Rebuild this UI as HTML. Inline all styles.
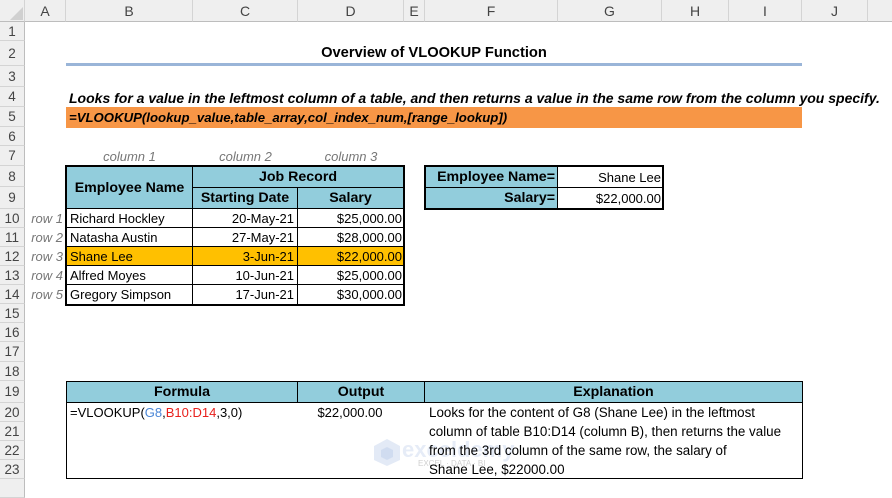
<!DOCTYPE html>
<html><head><meta charset="utf-8"><style>
*{margin:0;padding:0;box-sizing:border-box}
body{width:892px;height:487px;overflow:hidden;background:#fff;font-family:"Liberation Sans",sans-serif;font-size:13px;color:#000;position:relative}
.a{position:absolute;white-space:nowrap}
.ch{position:absolute;top:0;height:22px;background:#efefef;border-right:1px solid #d4d4d4;border-bottom:1px solid #bdbdbd;text-align:center;line-height:22px;color:#444;font-size:14px}
.rh{position:absolute;left:0;width:25px;background:#efefef;border-right:1px solid #bdbdbd;border-bottom:1px solid #d4d4d4;text-align:center;color:#444;font-size:13.5px}
.c{position:absolute;display:flex;align-items:center;padding:0 3px;white-space:nowrap}
.b{font-weight:bold}
.t{background:#92cddc}
.r{justify-content:flex-end}
.m{justify-content:center}
.g{color:#777;font-style:italic}
.h{font-size:14.2px}
</style></head><body>
<div class="ch" style="left:0;width:25px"></div>
<svg class="a" style="left:10px;top:7px" width="13" height="13"><polygon points="13,0 13,13 0,13" fill="#d0d0d0"/></svg>
<div class="ch" style="left:25px;width:41px">A</div>
<div class="ch" style="left:66px;width:127px">B</div>
<div class="ch" style="left:193px;width:105px">C</div>
<div class="ch" style="left:298px;width:106px">D</div>
<div class="ch" style="left:404px;width:21px">E</div>
<div class="ch" style="left:425px;width:133px">F</div>
<div class="ch" style="left:558px;width:104px">G</div>
<div class="ch" style="left:662px;width:67px">H</div>
<div class="ch" style="left:729px;width:73px">I</div>
<div class="ch" style="left:802px;width:66px">J</div>
<div class="ch" style="left:868px;width:24px;border-right:none"></div>
<div class="rh" style="top:22px;height:19px;line-height:19px">1</div>
<div class="rh" style="top:41px;height:25px;line-height:25px">2</div>
<div class="rh" style="top:66px;height:21px;line-height:21px">3</div>
<div class="rh" style="top:87px;height:20px;line-height:20px">4</div>
<div class="rh" style="top:107px;height:20px;line-height:20px">5</div>
<div class="rh" style="top:127px;height:19px;line-height:19px">6</div>
<div class="rh" style="top:146px;height:20px;line-height:20px">7</div>
<div class="rh" style="top:166px;height:21px;line-height:21px">8</div>
<div class="rh" style="top:187px;height:22px;line-height:22px">9</div>
<div class="rh" style="top:209px;height:19px;line-height:19px">10</div>
<div class="rh" style="top:228px;height:19px;line-height:19px">11</div>
<div class="rh" style="top:247px;height:19px;line-height:19px">12</div>
<div class="rh" style="top:266px;height:19px;line-height:19px">13</div>
<div class="rh" style="top:285px;height:19px;line-height:19px">14</div>
<div class="rh" style="top:304px;height:19px;line-height:19px">15</div>
<div class="rh" style="top:323px;height:19px;line-height:19px">16</div>
<div class="rh" style="top:342px;height:20px;line-height:20px">17</div>
<div class="rh" style="top:362px;height:19px;line-height:19px">18</div>
<div class="rh" style="top:381px;height:22px;line-height:22px">19</div>
<div class="rh" style="top:403px;height:19px;line-height:19px">20</div>
<div class="rh" style="top:422px;height:19px;line-height:19px">21</div>
<div class="rh" style="top:441px;height:19px;line-height:19px">22</div>
<div class="rh" style="top:460px;height:19px;line-height:19px">23</div>
<div class="rh" style="top:479px;height:19px;line-height:19px"></div>

<div class="c b m" style="left:66px;width:736px;top:43px;height:20px;font-size:14.7px">Overview of VLOOKUP Function</div>
<div class="a" style="left:66px;top:63px;width:736px;height:3px;background:#9ab5d8"></div>
<div class="c b" style="left:66px;top:88px;height:19px;font-style:italic;font-size:14px">Looks for a value in the leftmost column of a table, and then returns a value in the same row from the column you specify.</div>
<div class="c b" style="left:66px;top:107px;width:736px;height:21px;background:#f79646;font-style:italic;font-size:13.2px">=VLOOKUP(lookup_value,table_array,col_index_num,[range_lookup])</div>

<div class="c g m" style="left:66px;width:127px;top:146px;height:20px">column 1</div>
<div class="c g m" style="left:193px;width:105px;top:146px;height:20px">column 2</div>
<div class="c g m" style="left:298px;width:106px;top:146px;height:20px">column 3</div>

<div class="a" style="left:65px;top:165px;width:340px;height:141px;border:2px solid #000"></div>
<div class="c t b m h" style="left:67px;top:167px;width:126px;height:42px;border-right:1px solid #000;border-bottom:1px solid #000">Employee Name</div>
<div class="c t b m h" style="left:193px;top:167px;width:210px;height:21px;border-bottom:1px solid #000">Job Record</div>
<div class="c t b m h" style="left:193px;top:188px;width:105px;height:21px;border-right:1px solid #000;border-bottom:1px solid #000">Starting Date</div>
<div class="c t b m h" style="left:298px;top:188px;width:105px;height:21px;border-bottom:1px solid #000">Salary</div>

<div class="c g r" style="left:25px;width:41px;top:209px;height:19px">row 1</div>
<div class="c g r" style="left:25px;width:41px;top:228px;height:19px">row 2</div>
<div class="c g r" style="left:25px;width:41px;top:247px;height:19px">row 3</div>
<div class="c g r" style="left:25px;width:41px;top:266px;height:19px">row 4</div>
<div class="c g r" style="left:25px;width:41px;top:285px;height:19px">row 5</div>

<div class="a" style="left:67px;top:247px;width:336px;height:19px;background:#ffc000"></div>

<div class="c" style="left:67px;top:209px;width:126px;height:19px;border-right:1px solid #000;border-bottom:1px solid #000">Richard Hockley</div>
<div class="c r" style="left:193px;top:209px;width:105px;height:19px;border-right:1px solid #000;border-bottom:1px solid #000">20-May-21</div>
<div class="c r" style="left:298px;top:209px;width:105px;height:19px;border-bottom:1px solid #000;padding-right:1px">$25,000.00</div>

<div class="c" style="left:67px;top:228px;width:126px;height:19px;border-right:1px solid #000;border-bottom:1px solid #000">Natasha Austin</div>
<div class="c r" style="left:193px;top:228px;width:105px;height:19px;border-right:1px solid #000;border-bottom:1px solid #000">27-May-21</div>
<div class="c r" style="left:298px;top:228px;width:105px;height:19px;border-bottom:1px solid #000;padding-right:1px">$28,000.00</div>

<div class="c" style="left:67px;top:247px;width:126px;height:19px;border-right:1px solid #000;border-bottom:1px solid #000">Shane Lee</div>
<div class="c r" style="left:193px;top:247px;width:105px;height:19px;border-right:1px solid #000;border-bottom:1px solid #000">3-Jun-21</div>
<div class="c r" style="left:298px;top:247px;width:105px;height:19px;border-bottom:1px solid #000;padding-right:1px">$22,000.00</div>

<div class="c" style="left:67px;top:266px;width:126px;height:19px;border-right:1px solid #000;border-bottom:1px solid #000">Alfred Moyes</div>
<div class="c r" style="left:193px;top:266px;width:105px;height:19px;border-right:1px solid #000;border-bottom:1px solid #000">10-Jun-21</div>
<div class="c r" style="left:298px;top:266px;width:105px;height:19px;border-bottom:1px solid #000;padding-right:1px">$25,000.00</div>

<div class="c" style="left:67px;top:285px;width:126px;height:19px;border-right:1px solid #000">Gregory Simpson</div>
<div class="c r" style="left:193px;top:285px;width:105px;height:19px;border-right:1px solid #000">17-Jun-21</div>
<div class="c r" style="left:298px;top:285px;width:105px;height:19px;padding-right:1px">$30,000.00</div>

<div class="a" style="left:424px;top:165px;width:240px;height:45px;border:2px solid #000"></div>
<div class="c t b r h" style="left:426px;top:167px;width:132px;height:21px;border-right:1px solid #000;border-bottom:1px solid #000;padding-right:2px">Employee Name=</div>
<div class="c r" style="left:558px;top:167px;width:104px;height:21px;border-bottom:1px solid #000;padding-right:1px">Shane Lee</div>
<div class="c t b r h" style="left:426px;top:188px;width:132px;height:20px;border-right:1px solid #000;padding-right:2px">Salary=</div>
<div class="c r" style="left:558px;top:188px;width:104px;height:20px;padding-right:1px">$22,000.00</div>

<div class="a" style="left:66px;top:381px;width:737px;height:98px;border:1px solid #000"></div>
<div class="c t b m h" style="left:67px;top:382px;width:231px;height:21px;border-right:1px solid #000;border-bottom:1px solid #000">Formula</div>
<div class="c t b m h" style="left:298px;top:382px;width:127px;height:21px;border-right:1px solid #000;border-bottom:1px solid #000">Output</div>
<div class="c t b m h" style="left:425px;top:382px;width:377px;height:21px;border-bottom:1px solid #000">Explanation</div>
<div class="c" style="left:67px;top:403px;height:19px">=VLOOKUP(<span style="color:#4a86d6">G8</span>,<span style="color:#e8201c">B10:D14</span>,3,0)</div>
<div class="c m" style="left:298px;top:403px;width:104px;height:19px">$22,000.00</div>
<svg class="a" style="left:372px;top:437px" width="30" height="30"><polygon points="15,2 28,9 28,23 15,29 2,23 2,9" fill="#e3eaf6"/><polygon points="15,10 21,13 21,20 15,23 9,20 9,13" fill="#d0dcf0"/></svg>
<div class="a" style="left:402px;top:437px;font-size:22px;font-weight:bold;color:#e6ecf7">exceldemy</div>
<div class="a" style="left:418px;top:459px;font-size:8px;color:#d0d0d0">EXCEL · DATA · BI</div>
<div class="c" style="left:426px;top:403px;height:19px;font-size:13.4px">Looks for the content of G8 (Shane Lee) in the leftmost</div>
<div class="c" style="left:426px;top:422px;height:19px;font-size:13.4px">column of table B10:D14 (column B), then returns the value</div>
<div class="c" style="left:426px;top:441px;height:19px;font-size:13.4px">from the 3rd column of the same row, the salary of</div>
<div class="c" style="left:426px;top:460px;height:19px;font-size:13.4px">Shane Lee, $22000.00</div>
</body></html>
